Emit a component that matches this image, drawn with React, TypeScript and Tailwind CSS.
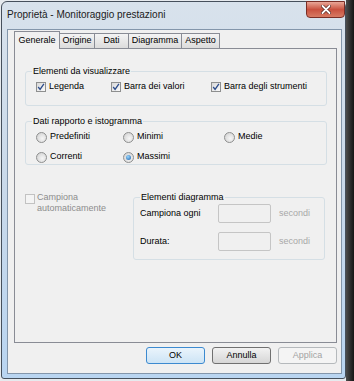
import type { ReactNode } from "react";

const Check = ({ checked = false, disabled = false }: { checked?: boolean; disabled?: boolean }) => (
  <span
    className={
      disabled
        ? "flex h-[10px] w-[10px] shrink-0 items-center justify-center border border-[#c2c2c2] bg-[#f4f4f4]"
        : "flex h-[10px] w-[10px] shrink-0 items-center justify-center border border-[#8e8f8f] bg-gradient-to-br from-[#d9d9d9] to-[#fafafa]"
    }
  >
    {checked && (
      <svg width="8" height="8" viewBox="0 0 8 8">
        <path d="M1.2 4 L3.1 6.4 L6.9 0.8" stroke="#2c4c8c" strokeWidth="1.3" fill="none" />
      </svg>
    )}
  </span>
);

const Radio = ({ selected = false }: { selected?: boolean }) => (
  <span className="flex h-[11px] w-[11px] shrink-0 items-center justify-center rounded-full border border-[#8e8f8f] bg-[radial-gradient(circle_at_60%_60%,#f6f6f6,#cdcdcd)]">
    {selected && (
      <span className="h-[5px] w-[5px] rounded-full bg-[radial-gradient(circle_at_40%_35%,#9ad8ff,#1b5ea8)]" />
    )}
  </span>
);

const Tab = ({ label, w, active = false }: { label: string; w: string; active?: boolean }) => (
  <div
    className={
      active
        ? `relative z-10 -mb-px flex h-[18px] ${w} items-start justify-center border border-b-0 border-[#898c95] bg-[#f0f0f0] pt-[2px]`
        : `flex h-[15px] ${w} items-center justify-center border border-b-0 border-l-0 border-[#898c95] bg-gradient-to-b from-[#f4f4f4] to-[#dcdcdc]`
    }
  >
    {label}
  </div>
);

const Group = ({ title, className, children }: { title: string; className: string; children: ReactNode }) => (
  <fieldset className={`rounded-[3px] border border-[#d5dfe5] pl-[6px] ${className}`}>
    <legend className="px-[1px] leading-[11px]">{title}</legend>
    {children}
  </fieldset>
);

const Button = ({ label, kind }: { label: string; kind: "default" | "normal" | "disabled" }) => {
  const look = {
    default: "border-[#3c8ad0] bg-gradient-to-b from-[#eaf4fc] to-[#cde4f5] text-black",
    normal: "border-[#707070] bg-gradient-to-b from-[#f2f2f2] to-[#d6d6d6] text-black",
    disabled: "border-[#b5b9bc] bg-[#f4f4f4] text-[#a3a3a3]",
  }[kind];
  return (
    <div className={`flex h-[17px] w-[59px] items-center justify-center rounded-[3px] border ${look}`}>
      {label}
    </div>
  );
};

export default function App() {
  return (
    <div className="flex h-[381px] w-[354px] overflow-hidden bg-[#e6eaee] font-['Liberation_Sans',Arial,sans-serif] text-[9px] text-black">
      <div className="ml-[1px] mt-[1px] flex h-[378px] w-[345px] flex-col rounded-t-[6px] rounded-b-[3px] border border-[#46505c] bg-gradient-to-b from-[#d8e2ec] via-[#c9d9ea] to-[#b9d5f1]">
        {/* title bar */}
        <div className="flex h-[27px] shrink-0 justify-between pl-[5px]">
          <span className="mt-[7px] text-[10px] leading-[12px] text-[#1b1b1b]">
            Proprietà - Monitoraggio prestazioni
          </span>
          <div className="-mt-[1px] flex h-[17px] w-[39px] items-center justify-center rounded-b-[4px] border border-[#7a2e26] bg-gradient-to-b from-[#e8a697] via-[#c9513f] to-[#d77a63]">
            <svg width="10" height="9" viewBox="0 0 10 9">
              <path d="M1.5 1 L8.5 8 M8.5 1 L1.5 8" stroke="#4a1b16" strokeWidth="3.2" strokeLinecap="round" />
              <path d="M1.5 1 L8.5 8 M8.5 1 L1.5 8" stroke="#ffffff" strokeWidth="1.9" strokeLinecap="round" />
            </svg>
          </div>
        </div>

        {/* client area */}
        <div className="ml-[5px] mr-[3px] flex h-[345px] flex-col border border-[#8396ab] bg-[#f0f0f0] pl-[6px] pr-[4px] pt-[1px]">
          <div className="flex h-[17px] items-end">
            <Tab label="Generale" w="w-[46px]" active />
            <Tab label="Origine" w="w-[35px]" />
            <Tab label="Dati" w="w-[34px]" />
            <Tab label="Diagramma" w="w-[53px]" />
            <Tab label="Aspetto" w="w-[38px]" />
          </div>

          <div className="flex h-[295px] w-[323px] flex-col border border-[#898c95] bg-[#f0f0f0] pl-[10px]">
            <Group title="Elementi da visualizzare" className="mt-[17px] w-[302px] pb-[12px]">
              <div className="mt-[4px] flex h-[12px] items-center pl-[4px]">
                <div className="flex w-[75px] items-center gap-[3px]">
                  <Check checked />
                  <span>Legenda</span>
                </div>
                <div className="flex w-[100px] items-center gap-[3px]">
                  <Check checked />
                  <span>Barra dei valori</span>
                </div>
                <div className="flex items-center gap-[3px]">
                  <Check checked />
                  <span>Barra degli strumenti</span>
                </div>
              </div>
            </Group>

            <Group title="Dati rapporto e istogramma" className="mt-[10px] w-[302px] pb-[1px]">
              <div className="mt-[4px] flex flex-col gap-[8px] pl-[4px]">
                <div className="flex h-[12px] items-center">
                  <div className="flex w-[87px] items-center gap-[3px]">
                    <Radio />
                    <span>Predefiniti</span>
                  </div>
                  <div className="flex w-[101px] items-center gap-[3px]">
                    <Radio />
                    <span>Minimi</span>
                  </div>
                  <div className="flex items-center gap-[3px]">
                    <Radio />
                    <span>Medie</span>
                  </div>
                </div>
                <div className="flex h-[12px] items-center">
                  <div className="flex w-[87px] items-center gap-[3px]">
                    <Radio />
                    <span>Correnti</span>
                  </div>
                  <div className="flex items-center gap-[3px]">
                    <Radio selected />
                    <span>Massimi</span>
                  </div>
                </div>
              </div>
            </Group>

            <div className="mt-[27px] flex items-start">
              <div className="flex w-[108px] items-start gap-[2px] text-[#8d8d8d]">
                <span className="mt-[1.5px]">
                  <Check disabled />
                </span>
                <span className="leading-[11px]">
                  Campiona
                  <br />
                  automaticamente
                </span>
              </div>

              <Group title="Elementi diagramma" className="w-[192px] pb-[8px]">
                <div className="mt-[1px] flex flex-col gap-[9px]">
                  <div className="flex h-[19px] items-center">
                    <span className="w-[78px]">Campiona ogni</span>
                    <span className="h-[19px] w-[53px] rounded-[2px] border border-[#c5c5c5] bg-[#f0f0f0]" />
                    <span className="ml-[8px] text-[#a8a8a8]">secondi</span>
                  </div>
                  <div className="flex h-[19px] items-center">
                    <span className="w-[78px]">Durata:</span>
                    <span className="h-[19px] w-[53px] rounded-[2px] border border-[#c5c5c5] bg-[#f0f0f0]" />
                    <span className="ml-[8px] text-[#a8a8a8]">secondi</span>
                  </div>
                </div>
              </Group>
            </div>
          </div>

          <div className="mt-[4px] flex w-[323px] justify-end gap-[7px]">
            <Button label="OK" kind="default" />
            <Button label="Annulla" kind="normal" />
            <Button label="Applica" kind="disabled" />
          </div>
        </div>
      </div>
      <div className="h-full w-[8px] bg-gradient-to-r from-[#4d4d4d] to-[#151515]" />
    </div>
  );
}
